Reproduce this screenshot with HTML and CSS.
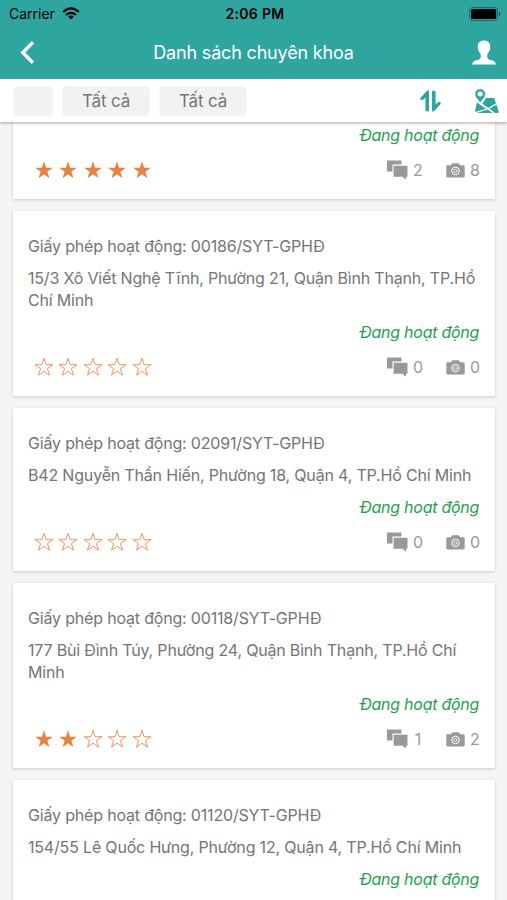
FILE: index.html
```
<!DOCTYPE html>
<html lang="vi">

<head>
  <meta charset="UTF-8">
  <meta name="viewport" content="width=device-width, initial-scale=1.0">
  <title>Danh sách chuyên khoa</title>
  <link rel="stylesheet" href="styles.css">
</head>

<body>
  <svg class="sprite">
    <symbol id="star" viewBox="0 0 20 20">
      <path d="M10 1.200l2.100 6.500h6.800l-5.500 4 2.100 6.500-5.500-4-5.500 4 2.100-6.500-5.500-4h6.800z" />
    </symbol>
    <symbol id="comments" viewBox="0 0 21 20">
      <path d="M0 .5h14.500v4H5.500v7H0z" />
      <path d="M6.600 5.700H20.500V16.700H19V19.800L15.500 16.700H6.600z" />
    </symbol>
    <symbol id="camera" viewBox="0 0 19 15">
      <path d="M1.500 2.300H4.800L6.200.3h6.600l1.400 2h3.300Q18.700 2.300 18.700 3.500v9.700q0 1.200-1.200 1.200h-16Q.3 14.400.3 13.200V3.500Q.3 2.300 1.500 2.300z" />
      <circle cx="9.500" cy="8" r="3.800" fill="none" stroke="#fff" stroke-width="1" />
      <circle cx="9.500" cy="8" r="1.600" fill="none" stroke="#fff" stroke-width=".8" />
    </symbol>
  </svg>

  <header>
    <div class="status-bar">
      <div class="carrier">
        <span>Carrier</span>
        <svg width="18" height="13" viewBox="0 0 18 13" fill="none" stroke="#000" stroke-width="2.300">
          <path d="M1.200 5Q9-2.200 16.800 5" />
          <path d="M4.100 8Q9 3.700 13.900 8" />
          <path d="M6.200 9.700Q9 7.500 11.800 9.700L9 12.600z" fill="#000" stroke="none" />
        </svg>
      </div>
      <strong>2:06 PM</strong>
      <svg class="battery" width="32" height="14" viewBox="0 0 32 14">
        <rect x=".6" y=".6" width="28" height="12.800" rx="3" fill="none" stroke="#1c6662" />
        <rect x="2" y="2" width="25.200" height="10" rx="1.500" />
        <path d="M30 4.800q1.600.6 1.600 2.200T30 9.200z" fill="#1c6662" />
      </svg>
    </div>
    <nav>
      <svg width="15" height="23" viewBox="0 0 15 23" fill="none" stroke="#fff" stroke-width="3.400">
        <path d="M13 1.300L2.800 11.500 13 21.700" />
      </svg>
      <h1>Danh sách chuyên khoa</h1>
      <svg width="24" height="25" viewBox="0 0 24 25" fill="#fff">
        <path d="M12 .5c4 0 6.200 2.500 6.200 6.200 0 3.500-1.300 5.500-2.900 7.300v3.300c0 1.700 1.500 2.200 4.200 3 2.700.7 4 1.600 4.200 4.200H.3c.2-2.600 1.500-3.500 4.200-4.200 2.700-.8 4.200-1.300 4.200-3V14C7.100 12.200 5.800 10.200 5.800 6.700 5.800 3 8 .5 12 .5z" />
      </svg>
    </nav>
  </header>

  <div class="filters">
    <button class="empty"></button>
    <button>Tất cả</button>
    <button>Tất cả</button>
    <div class="tools">
      <svg width="21" height="22" viewBox="0 0 21 22" fill="#2fa5a0">
        <path d="M9 1.500V20q0 1.500-1.800 1.500T5.400 20V7.800L3 9.800Q1.500 10.700.6 9.500T1 7.200L6.500 1.200Q8.700-.6 9 1.500z" />
        <path d="M12 20.500V2q0-1.500 1.800-1.500T15.600 2v12.200L18 12.200Q19.500 11.300 20.400 12.500T20 14.800L14.500 20.800Q12.300 22.600 12 20.500z" />
      </svg>
      <svg width="25" height="26" viewBox="0 0 25 26" fill="#2fa5a0">
        <path d="M12 9.900H20.100L22 15.300 14.200 19.900 8.300 15.800z" />
        <path d="M2.800 14.500L12.200 20.700.9 24z" />
        <path d="M22.500 16.400L24.700 24Q24.800 25 23.800 25H21.200L15.400 20.700z" />
        <path d="M2.500 25L13.700 21.600 18.600 25z" />
        <path d="M6.200.8a5.300 5.300 0 0 1 5.300 5.300c0 3.500-3.300 5.600-5.300 8.800C4.200 11.700.9 9.600.9 6.100A5.300 5.300 0 0 1 6.200.8z" stroke="#fff" stroke-width=".6" />
        <circle cx="6.200" cy="6.100" r="2.500" fill="#fff" />
      </svg>
    </div>
  </div>

  <main>
    <article class="card">
      <p class="state">Đang hoạt động</p>
      <footer>
        <div class="stars">
          <svg class="on"><use href="#star" /></svg>
          <svg class="on"><use href="#star" /></svg>
          <svg class="on"><use href="#star" /></svg>
          <svg class="on"><use href="#star" /></svg>
          <svg class="on"><use href="#star" /></svg>
        </div>
        <svg class="comments"><use href="#comments" /></svg>
        <span>2</span>
        <svg class="camera"><use href="#camera" /></svg>
        <span>8</span>
      </footer>
    </article>

    <article class="card">
      <p>Giấy phép hoạt động: 00186/SYT-GPHĐ</p>
      <p>15/3 Xô Viết Nghệ Tĩnh, Phường 21, Quận Bình Thạnh, TP.Hồ Chí Minh</p>
      <p class="state">Đang hoạt động</p>
      <footer>
        <div class="stars">
          <svg><use href="#star" /></svg>
          <svg><use href="#star" /></svg>
          <svg><use href="#star" /></svg>
          <svg><use href="#star" /></svg>
          <svg><use href="#star" /></svg>
        </div>
        <svg class="comments"><use href="#comments" /></svg>
        <span>0</span>
        <svg class="camera"><use href="#camera" /></svg>
        <span>0</span>
      </footer>
    </article>

    <article class="card">
      <p>Giấy phép hoạt động: 02091/SYT-GPHĐ</p>
      <p>B42 Nguyễn Thần Hiến, Phường 18, Quận 4, TP.Hồ Chí Minh</p>
      <p class="state">Đang hoạt động</p>
      <footer>
        <div class="stars">
          <svg><use href="#star" /></svg>
          <svg><use href="#star" /></svg>
          <svg><use href="#star" /></svg>
          <svg><use href="#star" /></svg>
          <svg><use href="#star" /></svg>
        </div>
        <svg class="comments"><use href="#comments" /></svg>
        <span>0</span>
        <svg class="camera"><use href="#camera" /></svg>
        <span>0</span>
      </footer>
    </article>

    <article class="card">
      <p>Giấy phép hoạt động: 00118/SYT-GPHĐ</p>
      <p>177 Bùi Đình Túy, Phường 24, Quận Bình Thạnh, TP.Hồ Chí Minh</p>
      <p class="state">Đang hoạt động</p>
      <footer>
        <div class="stars">
          <svg class="on"><use href="#star" /></svg>
          <svg class="on"><use href="#star" /></svg>
          <svg><use href="#star" /></svg>
          <svg><use href="#star" /></svg>
          <svg><use href="#star" /></svg>
        </div>
        <svg class="comments"><use href="#comments" /></svg>
        <span>1</span>
        <svg class="camera"><use href="#camera" /></svg>
        <span>2</span>
      </footer>
    </article>

    <article class="card">
      <p>Giấy phép hoạt động: 01120/SYT-GPHĐ</p>
      <p>154/55 Lê Quốc Hưng, Phường 12, Quận 4, TP.Hồ Chí Minh</p>
      <p class="state">Đang hoạt động</p>
    </article>
  </main>
</body>

</html>
```
FILE: styles.css
```
* {
  box-sizing: border-box;
}

body {
  margin: 0;
  height: 900px;
  overflow: hidden;
  display: flex;
  flex-direction: column;
  font-family: Inter, 'Noto Sans', sans-serif;
  background-color: #f5f5f5;
  color: #757575;
}

svg {
  display: block;
  flex-shrink: 0;
}

.sprite {
  position: absolute;
  width: 0;
  height: 0;
}

header {
  position: relative;
  z-index: 2;
  flex: 0 0 79px;
  background-color: #2fa5a0;
}

.status-bar {
  display: grid;
  grid-template-columns: 1fr auto 1fr;
  align-items: center;
  height: 27px;
  padding: 0 6px 0 9px;
  color: #000;
  font-size: 14px;

  strong {
    font-weight: 600;
    letter-spacing: .3px;
  }
}

.carrier {
  display: flex;
  align-items: center;
  gap: 7px;
}

.battery {
  justify-self: end;
}

nav {
  display: flex;
  align-items: center;
  justify-content: space-between;
  height: 50px;
  padding: 0 11px 0 20px;
}

h1 {
  margin: 0;
  color: #fff;
  font-size: 18px;
  font-weight: 400;
  letter-spacing: -.18px;
}

.filters {
  position: relative;
  z-index: 1;
  flex: 0 0 43px;
  display: flex;
  align-items: center;
  gap: 11px;
  padding: 0 8px 0 14px;
  background-color: #fff;
  box-shadow: 0 1px 3px rgba(0, 0, 0, .35);
}

button {
  width: 86px;
  height: 28px;
  padding: 0;
  border: 0;
  border-radius: 4px;
  background-color: #f2f2f2;
  box-shadow: 0 0 2px rgba(0, 0, 0, .14);
  color: #757575;
  font: 17px Inter, 'Noto Sans', sans-serif;
  letter-spacing: -.15px;

  &.empty {
    width: 38px;
  }
}

.tools {
  display: flex;
  align-items: center;
  gap: 33px;
  margin-left: auto;
}

/* the list is scrolled, the first card slides under the filters */
main {
  display: flex;
  flex-direction: column;
  gap: 12px;
  margin-top: -22px;
  padding: 0 12px 0 13px;
}

.card {
  display: flex;
  flex-direction: column;
  flex-shrink: 0;
  gap: 10px;
  padding: 24px 15px 18px;
  background-color: #fff;
  box-shadow: 0 1px 3px rgba(0, 0, 0, .18);

  p {
    margin: 0;
    font-size: 16px;
    line-height: 22px;
    letter-spacing: -.18px;
  }

  .state {
    align-self: flex-end;
    margin-right: 1px;
    color: #1fa04c;
    font-style: italic;
    letter-spacing: -.28px;
  }

  footer {
    display: flex;
    align-items: center;
    height: 22px;
    margin-top: 3px;
    color: #999;
    font-size: 16px;

    span {
      width: 10px;
      text-align: center;
    }
  }
}

.stars {
  display: flex;
  gap: 4.600px;
  margin: 0 auto 0 5.500px;

  svg {
    width: 20px;
    height: 20px;
    fill: none;
    stroke: #ee9362;
    stroke-width: 1;
  }

  .on {
    fill: #e8833f;
    stroke: none;
  }
}

.comments,
.camera {
  fill: #999;
}

.comments {
  width: 21px;
  height: 20px;
  margin-right: 5px;
}

.camera {
  width: 19px;
  height: 15px;
  margin: 0 5px 0 23px;
}
```
